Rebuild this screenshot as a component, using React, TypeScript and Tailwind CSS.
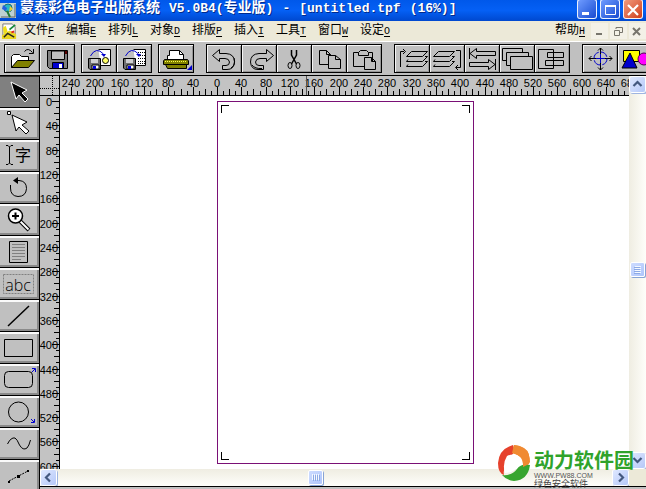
import type { ReactNode } from "react";

const song = "font-['Liberation_Mono','Noto_Sans_CJK_SC',monospace]";

type Tool = { name: string; art: ReactNode };

const fileTools: Tool[] = [
  {
    name: "打开",
    art: (
      <>
        <path d="M6.5 22.500V11.500L8.500 9.500H14.500L16.500 11.500H23.500V15.500" fill="#fff" stroke="#000" />
        <path d="M6.500 22.500L12.500 15.500H29.500L23.500 22.500Z" fill="#808000" stroke="#000" />
        <path d="M19.500 6.500Q23 2 27.500 7.500M28.500 4V8.500H24" stroke="#000" />
      </>
    ),
  },
  {
    name: "保存",
    art: (
      <>
        <path d="M7.500 5.500H27.500V23.500H9.500L7.500 21.500Z" fill="#808080" stroke="#000" />
        <path d="M11.500 6H24.500V14.500H11.500Z" fill="#c0c0c0" stroke="#000" />
        <path d="M12.500 17.500H23.500V23.500H12.500Z" fill="#0000d0" stroke="#000" />
        <path d="M19 19H22V23H19Z" fill="#fff" />
        <path d="M25 6H27V9H25Z" fill="#500" />
      </>
    ),
  },
];

const disk = (
  <>
    <path d="M6.500 13.500H18.500V24.500H8L6.500 23Z" fill="#707070" stroke="#000" />
    <path d="M9 14H16V18H9Z" fill="#d0d0d0" />
    <path d="M10 20H17V24H10Z" fill="#fff" stroke="#000" />
    <path d="M11 21H14V24H11Z" fill="#00d" />
    <path d="M8.500 11Q14 1 21.500 9" stroke="#00c" />
    <path d="M19 9H24L22 12Z" fill="#00c" />
  </>
);

const importTools: Tool[] = [
  {
    name: "导入图像",
    art: (
      <>
        <path d="M16.500 4.500H28.500V20.500H18.500" fill="#fff" stroke="#000" />
        <circle cx="23.500" cy="15.500" r="3" fill="#ff6" stroke="#000" />
        {disk}
      </>
    ),
  },
  {
    name: "导入文本",
    art: (
      <>
        <path d="M16.500 4.500H28.500V20.500H18.500" fill="#fff" stroke="#000" />
        <path d="M21 7.500H28M21 10.500H28M21 13.500H28M21 16.500H28M21 18.500H28" stroke="#000" strokeDasharray="1 1" />
        {disk}
      </>
    ),
  },
];

const printTools: Tool[] = [
  {
    name: "打印",
    art: (
      <>
        <path d="M8.500 14.500V10.500H10.500V5.500H20.500L24.500 9.500V14.500" fill="#fff" stroke="#000" />
        <path d="M20.500 5.500V9.500H24.500" stroke="#000" />
        <path d="M5.500 14.500H28.500L29.500 16V19.500H4.500V16Z" fill="#808000" stroke="#000" />
        <path d="M6 16.500H28" stroke="#ffff50" strokeDasharray="1 1" />
        <path d="M6.500 19.500H27.500V23.500H8.500Z" fill="#808000" stroke="#000" />
        <path d="M33 20V25H28Z" fill="#00c" />
      </>
    ),
  },
];

const editTools: Tool[] = [
  {
    name: "撤消",
    art: (
      <>
        <path d="M5.500 10.500L12.500 4.500V8.500H19Q27.500 9 27.500 17Q27 24.500 20 24.500H15.500V20.500H19Q22.500 20.500 22.500 17Q22 13.500 18 13.500H12.500V16.500Z" stroke="#000" />
        <path d="M27 13Q29 20 24 23" stroke="#000" />
      </>
    ),
  },
  {
    name: "重做",
    art: (
      <>
        <path d="M31.500 10.500L24.500 4.500V8.500H17Q8.500 9 8.500 17Q9 24.500 16 24.500H21.500V20.500H17Q13.500 20.500 13.500 17Q14 13.500 18 13.500H24.500V16.500Z" stroke="#000" />
        <path d="M10 20Q13 24 20 23.500" stroke="#000" />
      </>
    ),
  },
  {
    name: "剪切",
    art: (
      <>
        <path d="M14.500 5V10L19.500 19M19.500 5V10L14.500 19" stroke="#000" strokeWidth="1.500" />
        <ellipse cx="13" cy="20.500" rx="2" ry="3" stroke="#000" />
        <ellipse cx="21" cy="20.500" rx="2" ry="3" stroke="#000" />
      </>
    ),
  },
  {
    name: "复制",
    art: (
      <>
        <path d="M7.500 5.500H14.500L18.500 9.500V19.500H7.500ZM14.500 5.500V9.500H18.500" stroke="#000" />
        <path d="M16.500 10.500H23.500L28.500 14.500V23.500H16.500ZM23.500 10.500V14.500H28.500" fill="#c0c0c0" stroke="#000" />
      </>
    ),
  },
  {
    name: "粘贴",
    art: (
      <>
        <path d="M6.500 7.500H25.500V21.500H6.500Z" stroke="#000" />
        <path d="M11.500 10.500V7.500L13.500 5.500H19.500L21.500 7.500V10.500Z" fill="#c0c0c0" stroke="#000" />
        <path d="M17.500 12.500H24.500L28.500 16.500V24.500H17.500ZM24.500 12.500V16.500H28.500" fill="#c0c0c0" stroke="#000" />
      </>
    ),
  },
];

const layers = (
  <path d="M13.500 6.500H29.500L24.500 11.500H8.500ZM10 14.500L8.500 16.500H24.500L29.500 11.500H27M10 19.500L8.500 21.500H24.500L29.500 16.500H27" stroke="#000" />
);

const arrangeTools: Tool[] = [
  {
    name: "移到最前",
    art: (
      <>
        <g transform="translate(3 0)">{layers}</g>
        <path d="M5.500 22V6.500H9M8 4L10.500 6.500L8 9" stroke="#000" />
      </>
    ),
  },
  {
    name: "移到最后",
    art: (
      <>
        <g transform="translate(-5 0)">{layers}</g>
        <path d="M26 5.500H30.500V22.500H26M28 20L25.500 22.500L28 25" stroke="#000" />
      </>
    ),
  },
  {
    name: "对齐",
    art: (
      <>
        <path d="M4.500 3V14M5 8.500L11.500 3.500V6.500H30.500V10.500H11.500V13.500Z" stroke="#000" />
        <path d="M30.500 14V25M30 19.500L23.500 14.500V17.500H4.500V21.500H23.500V24.500Z" stroke="#000" />
      </>
    ),
  },
  {
    name: "层叠",
    art: (
      <>
        <path d="M2.500 3.500H22.500V15.500H2.500Z" stroke="#000" />
        <path d="M6.500 7.500H28.500V20.500H6.500Z" fill="#c0c0c0" stroke="#000" />
        <path d="M10.500 11.500H32.500V24.500H10.500Z" fill="#c0c0c0" stroke="#000" />
      </>
    ),
  },
  {
    name: "组合",
    art: <path d="M3.500 4.500H18.500V23.500H3.500ZM12.500 7.500H28.500V12.500H12.500ZM10.500 15.500H28.500V20.500H10.500Z" stroke="#000" />,
  },
];

const objectTools: Tool[] = [
  {
    name: "中心定位",
    art: (
      <>
        <path d="M17.500 3V25M6 13.500H29M15 5.500L17.500 3L20 5.500M15 22.500L17.500 25L20 22.500M8.500 11L6 13.500L8.500 16M26.500 11L29 13.500L26.500 16" stroke="#000" />
        <circle cx="17.500" cy="13.500" r="6.500" stroke="#00c" strokeDasharray="8 2" />
        <path d="M13 13.500H22M17.500 9V18" stroke="#00c" />
      </>
    ),
  },
  {
    name: "图形",
    art: (
      <>
        <path d="M5.500 5.500H21.500V16.500H5.500Z" fill="#ff0" stroke="#000" />
        <circle cx="26" cy="14" r="6" fill="#f0f" stroke="#505" />
        <path d="M12 8L19 23H4Z" fill="#00c" stroke="#000" />
      </>
    ),
  },
];

function ToolGroup({ tools }: { tools: Tool[] }) {
  return (
    <div className="flex shrink-0 border-l border-black">
      {tools.map((t) => (
        <button
          key={t.name}
          type="button"
          aria-label={t.name}
          className="h-[29px] w-[35px] border-y border-r border-black bg-[#c0c0c0] shadow-[inset_1px_1px_0_#f4f4f4,inset_-1px_-1px_0_#969696]"
        >
          <svg viewBox="0 0 34 27" className="h-[27px] w-[34px]" fill="none">
            {t.art}
          </svg>
        </button>
      ))}
    </div>
  );
}

const palette: Tool[] = [
  { name: "选择", art: <path d="M11 6L16 23L19 19L25 26L28 23L22 17L27 14Z" fill="#000" stroke="#fff" /> },
  {
    name: "节点",
    art: (
      <>
        <path d="M12 7L16 23L19 19L26 26L29 23L22 17L27 14Z" fill="#fff" stroke="#000" />
        <path d="M7.500 3.500H10.500V6.500H7.500Z" fill="#fff" stroke="#000" />
      </>
    ),
  },
  {
    name: "文字",
    art: (
      <>
        <path d="M6 5.500H8L9.500 7L11 5.500H13M9.500 7V23M6 24.500H8L9.500 23L11 24.500H13" stroke="#000" />
        <text x="15" y="21" fontSize="16" fill="#000" className="font-['Noto_Sans_CJK_SC',sans-serif]">
          字
        </text>
      </>
    ),
  },
  {
    name: "旋转",
    art: (
      <>
        <path d="M14 8.500H19Q26.500 9 26.500 16.500Q26 24.500 18 24.500Q10.500 24 10.500 16V13" stroke="#000" />
        <path d="M13 8.500L18 5V12Z" fill="#000" />
      </>
    ),
  },
  {
    name: "缩放",
    art: (
      <>
        <path d="M20 17L29 26" stroke="#000" strokeWidth="4" />
        <path d="M20 17L28.500 25.500" stroke="#fff" strokeWidth="2" />
        <circle cx="15.500" cy="12" r="7" fill="#fff" stroke="#000" strokeWidth="1.500" />
        <path d="M12 12H19M15.500 8.500V15.500" stroke="#000" strokeWidth="2" />
      </>
    ),
  },
  {
    name: "文本框",
    art: (
      <>
        <path d="M9.500 5.500H27.500V26.500H9.500Z" stroke="#000" />
        <path d="M12 8.500H25M12 11.500H25M12 14.500H25M12 17.500H25M12 20.500H25M12 23.500H21" stroke="#808080" />
      </>
    ),
  },
  {
    name: "标题",
    art: (
      <>
        <path d="M3.500 6.500H33.500V25.500H3.500Z" stroke="#808080" strokeDasharray="2 1" />
        <text x="18" y="23" fontSize="16" textAnchor="middle" fill="#000" className="font-['Open_Sans',sans-serif] font-light">
          abc
        </text>
      </>
    ),
  },
  { name: "直线", art: <path d="M8 26L29 6" stroke="#000" strokeWidth="1.500" /> },
  { name: "矩形", art: <path d="M4.500 7.500H32.500V24.500H4.500Z" stroke="#000" /> },
  {
    name: "圆角矩形",
    art: (
      <>
        <rect x="4.500" y="7.500" width="28" height="16" rx="4" stroke="#000" />
        <path d="M32 4.500H35.500V8M35 5L32 8" stroke="#00c" />
      </>
    ),
  },
  {
    name: "椭圆",
    art: (
      <>
        <circle cx="18.500" cy="16" r="10" stroke="#000" />
        <path d="M34.500 23V26.500H31M34 26L31 23" stroke="#00c" />
      </>
    ),
  },
  { name: "曲线", art: <path d="M7.500 16Q11 9 15 10Q17 11 19.500 17Q23 23 27 20Q29 18 30.500 12" stroke="#000" /> },
  {
    name: "连接线",
    art: (
      <>
        <path d="M9 21L28 11" stroke="#000" strokeDasharray="2 1" />
        <path d="M17 15H20V18H17ZM27 10H29V12H27ZM8 21H10V23H8Z" fill="#000" />
      </>
    ),
  },
];

const menus: [string, string][] = [
  ["文件", "F"],
  ["编辑", "E"],
  ["排列", "L"],
  ["对象", "D"],
  ["排版", "P"],
  ["插入", "I"],
  ["工具", "T"],
  ["窗口", "W"],
  ["设定", "O"],
];

function MenuItem({ label, hotkey }: { label: string; hotkey: string }) {
  return (
    <button type="button" className="flex w-[30px] items-center whitespace-nowrap text-[12px] leading-[18px]">
      {label}
      <span className="text-[10px] leading-[11px] underline underline-offset-2">{hotkey}</span>
    </button>
  );
}

// Pixels taken up by ten document units on either ruler.
const STEP = 6.08;

function RulerAcross() {
  const ticks = Array.from({ length: 95 }, (_, i) => i - 25);
  return (
    <svg className="h-5 min-w-0 flex-1 bg-[#c3c3c3]" fill="none">
      <g transform="translate(157 0)">
        {ticks.map((n) => {
          const x = Math.round(n * STEP) + 0.5;
          return <path key={n} d={`M${x} ${n % 4 === 0 ? 11 : n % 2 === 0 ? 13 : 15}V19`} stroke="#000" />;
        })}
        {ticks
          .filter((n) => n % 4 === 0 && n <= 68)
          .map((n) => (
            <text key={n} x={Math.round(n * STEP)} y="11" fontSize="11" textAnchor="middle" fill="#000" className="font-['Liberation_Sans',sans-serif]">
              {Math.abs(n * 10)}
            </text>
          ))}
        <path d="M89.500 0V19" stroke="#555" />
      </g>
      <path d="M0 19.500H3000" stroke="#000" />
    </svg>
  );
}

function RulerDown() {
  const ticks = Array.from({ length: 62 }, (_, i) => i);
  return (
    <svg className="h-full w-5 shrink-0 bg-[#c3c3c3]" fill="none">
      {ticks.map((n) => {
        const y = Math.round(n * STEP) + 5.5;
        return <path key={n} d={`M${n % 4 === 0 ? 12 : n % 2 === 0 ? 14 : 16} ${y}H19`} stroke="#000" />;
      })}
      {ticks
        .filter((n) => n % 4 === 0)
        .map((n) => (
          <text key={n} x={n === 0 ? 12 : 18} y={Math.round(n * STEP) + 10} fontSize="11" textAnchor="end" fill="#000" className="font-['Liberation_Sans',sans-serif]">
            {n * 10}
          </text>
        ))}
      <path d="M19.500 0V3000" stroke="#000" />
    </svg>
  );
}

const arrows = {
  up: "M3.500 9L7.500 5L11.500 9",
  down: "M3.500 5L7.500 9L11.500 5",
  left: "M9 3.500L5 7.500L9 11.500",
  right: "M6 3.500L10 7.500L6 11.500",
};

function ScrollButton({ to, label }: { to: keyof typeof arrows; label: string }) {
  return (
    <button type="button" aria-label={label} className="size-[15px] shrink-0 rounded-[2px] bg-linear-to-br from-[#dfe8ff] to-[#b5c8f8] shadow-[0_0_0_1px_#fff,1px_1px_0_1px_#9eb4e0]">
      <svg viewBox="0 0 15 15" className="size-[15px]" fill="none">
        <path d={arrows[to]} stroke="#43587f" strokeWidth="2.200" />
      </svg>
    </button>
  );
}

function Thumb({ label, vertical }: { label: string; vertical?: boolean }) {
  return (
    <button type="button" aria-label={label} className="size-[15px] shrink-0 rounded-[2px] border border-white bg-linear-to-br from-[#cddcff] to-[#afc5fb] shadow-[1px_1px_0_#87a3d5]">
      <svg viewBox="0 0 13 13" className="size-[13px]" fill="none">
        <g transform={vertical ? "rotate(90 6.500 6.500)" : undefined}>
          <path d="M3.500 3V9M5.500 3V9M7.500 3V9M9.500 3V9" stroke="#f4f8ff" />
          <path d="M4.500 4V10M6.500 4V10M8.500 4V10M10.500 4V10" stroke="#8ca9e5" />
        </g>
      </svg>
    </button>
  );
}

const caption = "flex h-5 w-5 items-center justify-center rounded-[3px] border border-white/90 bg-linear-to-br";

export default function App() {
  return (
    <div className={`relative flex h-screen flex-col overflow-hidden bg-[#c0c0c0] text-black ${song}`}>
      <header className="flex h-[21px] shrink-0 items-center bg-linear-to-b from-[#0058ea] via-[#0560f5] to-[#0048cf] pr-[3px]">
        <svg viewBox="0 0 16 16" className="h-4 w-4 shrink-0" fill="none">
          <path d="M0 0H16V15H0Z" fill="#bdd0d2" />
          <path d="M1 14H15V1" stroke="#666" />
          <circle cx="8" cy="5" r="4" fill="#26b7c5" stroke="#176e78" />
          <path d="M3 2L7 5L6 8L2 6Z" fill="#245fe0" />
          <path d="M10 3L13 6L9 9Z" fill="#e8cf34" />
          <path d="M7 8L10 14" stroke="#207a36" strokeWidth="2" />
        </svg>
        <h1 className="flex min-w-0 flex-1 gap-[9px] pb-1 pl-1 text-[13px] font-bold leading-[17px] whitespace-nowrap text-white [text-shadow:1px_1px_0_#002a8c]">
          <span className="text-[14px]">蒙泰彩色电子出版系统</span>
          <span>
            V5.0B4(<span className="text-[14px]">专业版</span>)
          </span>
          <span>-</span>
          <span>[untitled.tpf</span>
          <span>(16%)]</span>
        </h1>
        <div className="flex gap-[3px] pb-[3px]">
          <button type="button" aria-label="最小化" className={`${caption} from-[#6f9bff] to-[#1849d0]`}>
            <svg viewBox="0 0 16 16" className="size-4"><path d="M3 11H10V14H3Z" fill="#fff" /></svg>
          </button>
          <button type="button" aria-label="最大化" className={`${caption} from-[#6f9bff] to-[#1849d0]`}>
            <svg viewBox="0 0 16 16" className="size-4" fill="none"><path d="M3 4.500H14M3.500 4V13.500H13.500V4" stroke="#fff" /><path d="M3 5H14" stroke="#fff" strokeWidth="2" /></svg>
          </button>
          <button type="button" aria-label="关闭" className={`${caption} from-[#f0997c] to-[#cf3a12]`}>
            <svg viewBox="0 0 16 16" className="size-4" fill="none"><path d="M3 4L13 14M13 4L3 14" stroke="#fff" strokeWidth="2.200" /></svg>
          </button>
        </div>
      </header>

      <nav aria-label="菜单" className="flex h-5 shrink-0 items-center bg-[#ece9d8]">
        <svg viewBox="0 0 18 18" className="mr-[6px] ml-px h-[17px] w-[17px] shrink-0" fill="none">
          <path d="M2 1H12L15 4V16H2Z" fill="#fff" stroke="#777" />
          <path d="M2 5L5 3L7 9L3 12Z" fill="#f0df18" />
          <path d="M1 13L9 8L16 12V17H1Z" fill="#e8d521" />
          <path d="M3 15L7 11L14 15" stroke="#222" strokeWidth="1.500" />
          <path d="M9 7L15 2" stroke="#188a3a" strokeWidth="2" />
          <path d="M11 10L14 9" stroke="#e0261b" strokeWidth="2" />
        </svg>
        <div className="flex min-w-0 flex-1 gap-3">
          {menus.map(([label, hotkey]) => (
            <MenuItem key={hotkey} label={label} hotkey={hotkey} />
          ))}
        </div>
        <MenuItem label="帮助" hotkey="H" />
        <div className="ml-[6px] flex gap-[2px]">
          <button type="button" aria-label="最小化文档" className="h-4 w-[17px] bg-[#f3f1e7]">
            <svg viewBox="0 0 16 16" className="size-4"><path d="M5 10H11V12H5Z" fill="#77756c" /></svg>
          </button>
          <button type="button" aria-label="还原文档" className="h-4 w-[17px] bg-[#f3f1e7]">
            <svg viewBox="0 0 16 16" className="size-4" fill="none"><path d="M6 6V4.500H12.500V9.500H10M4.500 7.500H9.500V12.500H4.500Z" stroke="#77756c" /></svg>
          </button>
          <button type="button" aria-label="关闭文档" className="h-4 w-[17px] bg-[#f3f1e7]">
            <svg viewBox="0 0 16 16" className="size-4" fill="none"><path d="M4 5L11 12M11 5L4 12" stroke="#77756c" strokeWidth="2" /></svg>
          </button>
        </div>
      </nav>

      <div role="toolbar" aria-label="常用工具" className="flex h-[35px] shrink-0 items-center gap-3 border-t border-b border-t-white border-b-black bg-[#c0c0c0] pl-1">
        <div className="flex gap-[6px]">
          <ToolGroup tools={fileTools} />
          <ToolGroup tools={importTools} />
          <ToolGroup tools={printTools} />
        </div>
        <ToolGroup tools={editTools} />
        <ToolGroup tools={arrangeTools} />
        <ToolGroup tools={objectTools} />
      </div>

      <main className="flex min-h-0 flex-1">
        <aside aria-label="绘图工具" className="flex w-10 shrink-0 flex-col overflow-hidden border-r border-black">
          {palette.map((t, i) => (
            <button
              key={t.name}
              type="button"
              aria-label={t.name}
              className={`h-8 shrink-0 border-b border-black ${i === 0 ? "bg-[#808080] shadow-[inset_0_1px_0_#333]" : "bg-[#c0c0c0] shadow-[inset_0_2px_0_#fafafa,inset_-2px_-2px_0_#8a8a8a]"}`}
            >
              <svg viewBox="0 0 39 31" className="h-[31px] w-[39px]" fill="none">
                {t.art}
              </svg>
            </button>
          ))}
        </aside>

        <div className="flex min-w-0 flex-1 flex-col">
          <div className="flex min-h-0 flex-1">
            <div className="flex min-w-0 flex-1 flex-col">
              <div className="flex h-5 shrink-0">
                <svg viewBox="0 0 20 20" className="size-5 shrink-0 bg-[#c3c3c3]" fill="none">
                  <path d="M0 12.500H19M12.500 0V19" stroke="#000" strokeDasharray="1 1" />
                  <path d="M0 19.500H20M19.500 0V20" stroke="#000" />
                </svg>
                <RulerAcross />
              </div>
              <div className="flex min-h-0 flex-1">
                <RulerDown />
                <section aria-label="页面" className="flex min-w-0 flex-1 bg-white pt-[5px] pb-[5px] pl-[157px]">
                  <div className="flex w-[257px] flex-col justify-between border border-[#7a1076] p-[3px]">
                    <div className="flex justify-between">
                      <i className="size-2 border-t border-l border-black" />
                      <i className="size-2 border-t border-r border-black" />
                    </div>
                    <div className="flex justify-between">
                      <i className="size-2 border-b border-l border-black" />
                      <i className="size-2 border-r border-b border-black" />
                    </div>
                  </div>
                </section>
              </div>
            </div>
            <div className="flex w-[17px] shrink-0 flex-col items-center bg-linear-to-r from-[#efede2] to-[#fefefa] py-px">
              <ScrollButton to="up" label="向上滚动" />
              <div className="flex-[49]" />
              <Thumb vertical label="垂直滚动" />
              <div className="flex-[51]" />
              <ScrollButton to="down" label="向下滚动" />
            </div>
          </div>
          <div className="flex h-[17px] shrink-0">
            <div className="flex min-w-0 flex-1 items-center bg-linear-to-b from-[#efede2] to-[#fefefa] px-px">
              <ScrollButton to="left" label="向左滚动" />
              <div className="flex-[93]" />
              <Thumb label="水平滚动" />
              <div className="flex-[107]" />
              <ScrollButton to="right" label="向右滚动" />
            </div>
            <div className="w-[17px] bg-[#ece9d8]" />
          </div>
          <footer className="h-[3px] shrink-0 border-t border-black bg-[#c0c0c0]" />
        </div>
      </main>

      <div className="pointer-events-none absolute right-3 bottom-0 flex h-[46px] gap-px">
        <svg viewBox="0 0 36 40" className="mt-px h-10 w-9" fill="none">
          <path d="M16 1Q2 5 1 19Q1 29 7 31Q5 21 17 18Q11 13 18 8Q17 4 16 1Z" fill="#e6412c" />
          <path d="M17 1Q33 3 33 18Q31 22 26 23Q27 12 15 9Z" fill="#f08a32" />
          <path d="M5 31Q15 32 20 25Q24 19 33 21Q31 36 17 37Q9 36 5 31Z" fill="#37a52f" />
          <path d="M10 12Q18 8 25 14Q27 19 22 22Q16 29 8 29Q5 20 10 12Z" fill="#fff" />
          <path d="M16 9Q27 12 26 23L32 20Q34 8 27 4Q22 1 17 1Z" fill="#f08a32" />
        </svg>
        <div className="font-['Liberation_Sans','Noto_Sans_CJK_SC',sans-serif] whitespace-nowrap">
          <p className="pt-[7px] text-[20px] leading-[22px] font-bold text-[#2fa32b]">动力软件园</p>
          <p className="text-[7px] leading-[8px] text-[#555]">WWW.PW88.COM</p>
          <p className="text-[9px] leading-[9px] text-[#444]">绿色安全软件</p>
        </div>
      </div>
    </div>
  );
}
